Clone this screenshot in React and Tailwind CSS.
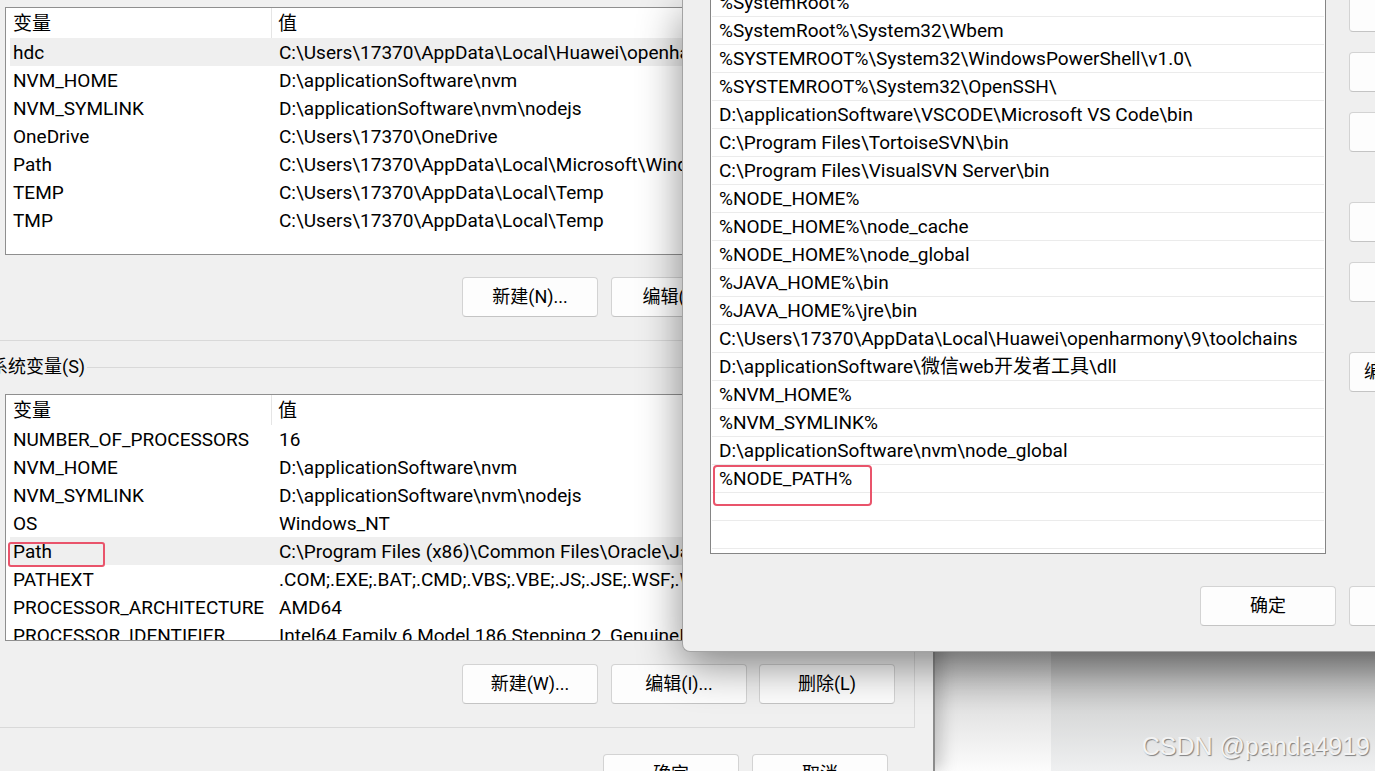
import React from 'react';

const userVars = [
    ["hdc", "C:\\Users\\17370\\AppData\\Local\\Huawei\\openharmony\\9\\toolchains", true],
    ["NVM_HOME", "D:\\applicationSoftware\\nvm"],
    ["NVM_SYMLINK", "D:\\applicationSoftware\\nvm\\nodejs"],
    ["OneDrive", "C:\\Users\\17370\\OneDrive"],
    ["Path", "C:\\Users\\17370\\AppData\\Local\\Microsoft\\WindowsApps;"],
    ["TEMP", "C:\\Users\\17370\\AppData\\Local\\Temp"],
    ["TMP", "C:\\Users\\17370\\AppData\\Local\\Temp"],
];

const sysVars = [
    ["NUMBER_OF_PROCESSORS", "16"],
    ["NVM_HOME", "D:\\applicationSoftware\\nvm"],
    ["NVM_SYMLINK", "D:\\applicationSoftware\\nvm\\nodejs"],
    ["OS", "Windows_NT"],
    ["Path", "C:\\Program Files (x86)\\Common Files\\Oracle\\Java\\javapath;", true, true],
    ["PATHEXT", ".COM;.EXE;.BAT;.CMD;.VBS;.VBE;.JS;.JSE;.WSF;.WSH;.MSC"],
    ["PROCESSOR_ARCHITECTURE", "AMD64"],
    ["PROCESSOR_IDENTIFIER", "Intel64 Family 6 Model 186 Stepping 2, GenuineIntel"],
];

const pathEntries = [
    "%SystemRoot%",
    "%SystemRoot%\\System32\\Wbem",
    "%SYSTEMROOT%\\System32\\WindowsPowerShell\\v1.0\\",
    "%SYSTEMROOT%\\System32\\OpenSSH\\",
    "D:\\applicationSoftware\\VSCODE\\Microsoft VS Code\\bin",
    "C:\\Program Files\\TortoiseSVN\\bin",
    "C:\\Program Files\\VisualSVN Server\\bin",
    "%NODE_HOME%",
    "%NODE_HOME%\\node_cache",
    "%NODE_HOME%\\node_global",
    "%JAVA_HOME%\\bin",
    "%JAVA_HOME%\\jre\\bin",
    "C:\\Users\\17370\\AppData\\Local\\Huawei\\openharmony\\9\\toolchains",
    "D:\\applicationSoftware\\微信web开发者工具\\dll",
    "%NVM_HOME%",
    "%NVM_SYMLINK%",
    "D:\\applicationSoftware\\nvm\\node_global",
    "%NODE_PATH%",
    "",
    "",
];

const WinButton = ({ children, className = "" }) => (
    <div className={`w-[136px] h-[40px] shrink-0 flex items-center justify-center bg-[#fdfdfd] border border-[#d3d3d3] border-b-[#c4c4c4] rounded-[4px] text-[18px] whitespace-nowrap ${className}`}>
        {children}
    </div>
);

const VarList = ({ rows, className = "" }) => (
    <div className={`ml-[5px] w-[890px] shrink-0 bg-white border border-[#8f8f8f] overflow-hidden ${className}`}>
        <div className="flex h-[30px]">
            <div className="w-[266px] pl-[7px] flex items-center border-r border-[#e5e5e5]">变量</div>
            <div className="pl-[6px] flex items-center">值</div>
        </div>
        {rows.map(([name, value, selected, marked]) => (
            <div key={name} className={`relative ml-[4px] flex h-[28px] items-center whitespace-nowrap ${selected ? "bg-[#efefef]" : ""}`}>
                <div className="w-[269px] pl-[3px] shrink-0">{name}</div>
                <div>{value}</div>
                {marked && (
                    <div className="absolute left-[-2px] top-[5px] w-[97px] h-[25px] border-2 border-[#e9546b] rounded-[3px]" />
                )}
            </div>
        ))}
    </div>
);

const EnvDialog = () => (
    <div className="relative z-10 w-[935px] h-full shrink-0 bg-[#f0f0f0] border-r-2 border-[#8c8c8c] shadow-[6px_0_16px_rgba(0,0,0,0.2)] flex flex-col">
        {/* 用户变量 */}
        <div className="w-[915px] h-[341px] shrink-0 border-b border-r border-[#d9d9d9] pt-[7px]">
            <VarList rows={userVars} className="h-[248px]" />
            <div className="mt-[22px] flex gap-[13px] pl-[462px]">
                <WinButton>新建(N)...</WinButton>
                <WinButton>编辑(E)...</WinButton>
                <WinButton>删除(D)</WinButton>
            </div>
        </div>

        {/* 系统变量 */}
        <div className="w-[915px] shrink-0 mt-[13px] border-b border-r border-[#d9d9d9] pb-[23px]">
            <div className="flex items-center h-[26px] -ml-[10px]">
                <span className="text-[18px] pr-[2px]">系统变量(S)</span>
                <div className="flex-1 h-px bg-[#d9d9d9]" />
            </div>
            <VarList rows={sysVars} className="mt-[14px] h-[247px]" />
            <div className="mt-[23px] flex gap-[13px] pl-[462px]">
                <WinButton>新建(W)...</WinButton>
                <WinButton>编辑(I)...</WinButton>
                <WinButton className="ml-[-1px]">删除(L)</WinButton>
            </div>
        </div>

        <div className="mt-[26px] shrink-0 flex gap-[13px] pl-[603px]">
            <WinButton>确定</WinButton>
            <WinButton>取消</WinButton>
        </div>
    </div>
);

const EditDialog = () => (
    <div className="absolute z-20 left-[682px] top-0 w-[780px] h-[652px] bg-[#efefef] border-l border-b border-[#a3a3a3] rounded-bl-[8px] shadow-[0_14px_44px_rgba(0,0,0,0.45)] flex flex-col">
        <div className="flex items-start">
            <div className="ml-[27px] -mt-[12px] w-[616px] h-[566px] shrink-0 bg-white border border-[#858585] overflow-hidden">
                {pathEntries.map((entry, i) => (
                    <div key={i} className="relative mx-[1px] h-[28px] pl-[7px] flex items-center border-b border-[#ebebeb] whitespace-nowrap">
                        {entry}
                        {entry === "%NODE_PATH%" && (
                            <div className="absolute left-[1px] top-0 w-[159px] h-[41px] border-2 border-[#e9546b] rounded-[4px]" />
                        )}
                    </div>
                ))}
            </div>
            <div className="ml-[23px] -mt-[8px] flex flex-col">
                <WinButton>新建(N)</WinButton>
                <WinButton className="mt-[20px]">编辑(E)</WinButton>
                <WinButton className="mt-[20px]">浏览(B)...</WinButton>
                <WinButton className="mt-[50px]">删除(D)</WinButton>
                <WinButton className="mt-[20px]">上移(U)</WinButton>
                <WinButton className="mt-[50px] !justify-start pl-[14px]">编辑文本(T)...</WinButton>
            </div>
        </div>
        <div className="mt-[32px] ml-[517px] flex gap-[13px]">
            <WinButton className="border-[#0067c0] border-b-[#0067c0]">确定</WinButton>
            <WinButton>取消</WinButton>
        </div>
    </div>
);

export default function App() {
    return (
        <div className="relative w-[1375px] h-[771px] overflow-hidden bg-[#eff0f1] text-black text-[19px] leading-none font-[Roboto,'Noto_Sans_CJK_SC',sans-serif]">
            <div className="flex h-full">
                <EnvDialog />
                {/* 背后窗口区域，只露出对话框下方一截 */}
                <div className="flex-1 flex flex-col">
                    <div className="h-[652px] shrink-0" />
                    <div className="flex-1 flex">
                        <div className="w-[116px] shrink-0 bg-linear-to-b from-[#bdbdbd] via-[#e4e4e4] to-[#fcfcfc]" />
                        <div className="flex-1 bg-linear-to-b from-[#adadad] via-[#d8d9d9] to-[#eff0f1]" />
                    </div>
                </div>
            </div>
            <EditDialog />
            <div className="absolute z-30 right-[5px] bottom-[12px] text-[25px] leading-none font-['Liberation_Sans',Arial,sans-serif] text-[#f3f3f3] [text-shadow:1px_1px_1px_rgba(0,0,0,0.45)]">
                CSDN @panda4919
            </div>
        </div>
    );
}
